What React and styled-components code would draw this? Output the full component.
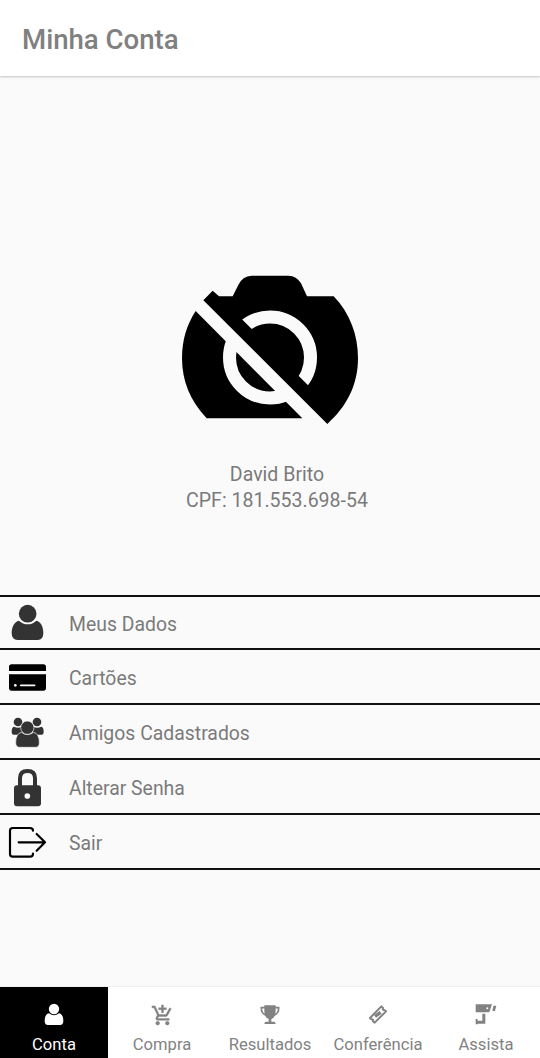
import React from "react";
import styled, { createGlobalStyle } from "styled-components";
import { MdAddShoppingCart } from "react-icons/md";

const GlobalStyle = createGlobalStyle`
  * { box-sizing: border-box; }
  body { margin: 0; background: #fafafa; font-family: Roboto, "Noto Sans", sans-serif; }
`;

const Screen = styled.div`
  display: flex;
  flex-direction: column;
  height: 1058px;
  background: #fafafa;
  color: #7a7a7a;
`;

const Header = styled.header`
  display: flex;
  align-items: center;
  flex: none;
  height: 76px;
  padding: 3px 22px 0;
  background: #fff;
  box-shadow: 0 1px 2px rgba(0, 0, 0, 0.22);
`;

const Title = styled.h1`
  margin: 0;
  font-size: 27.6px;
  font-weight: 500;
  color: #808080;
`;

const Profile = styled.section`
  display: flex;
  flex-direction: column;
  align-items: center;
  flex: none;
  height: 519px;
  padding-top: 184px;
`;

const Photo = styled.svg`
  width: 200px;
  height: 180px;
`;

const Info = styled.div`
  margin: 22px 0 0 14px;
  text-align: center;
  font-size: 19.55px;
  line-height: 26px;
`;

const Menu = styled.nav`
  border-top: 2px solid #111;
`;

const MenuItem = styled.a`
  display: flex;
  align-items: center;
  height: ${(p) => (p.$first ? 53 : 55)}px;
  border-bottom: 2px solid #111;
  font-size: 19.4px;
`;

const MenuLabel = styled.span`
  padding-top: 3px;
`;

const MenuIcon = styled.svg`
  flex: none;
  width: 54px;
  height: 53px;
  margin-right: 15px;
`;

const Tabs = styled.nav`
  display: grid;
  grid-template-columns: repeat(5, 1fr);
  height: 72px;
  margin-top: auto;
  background: #fff;
  border-top: 1px solid #efefef;
`;

const Tab = styled.a`
  display: flex;
  flex-direction: column;
  align-items: center;
  padding-top: 16px;
  background: ${(p) => (p.$active ? "#000" : "#fff")};
  color: ${(p) => (p.$active ? "#fff" : "#828282")};
  font-size: 16.6px;
  line-height: 20px;
  white-space: nowrap;
`;

const TabIcon = styled.span`
  display: flex;
  align-items: center;
  justify-content: center;
  height: 24px;
  margin-bottom: 8px;
`;

const CartIcon = styled(MdAddShoppingCart)`
  width: 23px;
  height: 23px;

  path:last-child {
    stroke: currentColor;
    stroke-width: 0.4px;
  }
`;

const NoPhoto = () => (
  <Photo viewBox="0 0 600 540">
    <clipPath id="ring-upper">
      <path d="M197 159L435 397H520V100H197Z" />
    </clipPath>
    <clipPath id="ring-lower">
      <path d="M81 149L403 471V520H75Z" />
    </clipPath>
    <path d="M128 92L147 109H188L205 75Q217 48 245 47H355Q380 48 393 70L411 109H491C540 160 564 225 564 295C564 375 530 440 472 492L100 121Z" />
    <path d="M77 153C50 195 36 240 36 295C36 365 62 425 110 475H397Z" />
    <g fill="none" stroke="#fafafa" strokeWidth="39">
      <circle cx="300" cy="292.500" r="121.500" clipPath="url(#ring-upper)" />
      <circle cx="300" cy="292.500" r="121.500" clipPath="url(#ring-lower)" />
    </g>
  </Photo>
);

const UserIcon = () => (
  <MenuIcon viewBox="0 18 162 159" fill="#333">
    <circle cx="83" cy="71" r="26.5" />
    <path d="M57 92Q68 103 83 103Q98 103 109 92C123 95 130 110 130 129Q130 150 113 150H53Q35 150 35 129C35 110 43 95 57 92Z" />
  </MenuIcon>
);

const CardIcon = () => (
  <MenuIcon viewBox="0 180 162 159">
    <path d="M27 243V231Q27 223 35 223H130Q138 223 138 231V243ZM27 253H138V294Q138 302 130 302H35Q27 302 27 294Z" />
    <circle cx="46" cy="286" r="4" fill="#fafafa" />
    <path d="M62 286H104" stroke="#fafafa" strokeWidth="5" strokeLinecap="round" />
  </MenuIcon>
);

const FriendsIcon = () => (
  <MenuIcon viewBox="0 15 162 159" fill="#333">
    <circle cx="54" cy="66" r="13" />
    <circle cx="111" cy="66" r="13" />
    <path d="M42 80Q54 86 66 80V104H41Q35 104 35 95Q35 82 42 80ZM124 80Q112 86 99 80V104H125Q131 104 131 95Q131 82 124 80Z" />
    <g stroke="#fafafa" strokeWidth="2">
      <path d="M64 97Q82 110 101 97Q118 101 118 128Q118 142 106 142H60Q47 142 47 128Q47 101 64 97Z" />
      <circle cx="82" cy="83" r="20" />
    </g>
  </MenuIcon>
);

const LockIcon = () => (
  <MenuIcon viewBox="0 180 162 159" fill="#333">
    <rect x="42" y="256" width="81" height="63" rx="9" />
    <path d="M60 260V235Q60 213 82.500 213Q105 213 105 235V260" fill="none" stroke="#333" strokeWidth="12" />
    <circle cx="82" cy="288" r="8.500" fill="#fafafa" />
  </MenuIcon>
);

const ExitIcon = () => (
  <MenuIcon viewBox="0 345 162 159" fill="none" stroke="#000" strokeWidth="6.5" strokeLinecap="round" strokeLinejoin="round">
    <path d="M99 392Q99 384 90 384H38Q30 384 30 392V462Q30 470 38 470H90Q99 470 99 461M56 427H135M110 402L135 427L110 452" />
  </MenuIcon>
);

const AccountTabIcon = () => (
  <svg width="36" height="24" viewBox="108 69 108 72" fill="currentColor">
    <circle cx="162" cy="87" r="15.500" />
    <path d="M147 100Q162 112 177 100C187 102 190 112 190 122Q190 135 180 135H144Q134 135 134 122C134 112 137 102 147 100Z" />
  </svg>
);

const TrophyIcon = () => (
  <svg width="36" height="24" viewBox="6 15 108 72" fill="currentColor">
    <path d="M43 22H77V40Q76 59 64 63V71H72Q76 71 77 78H43Q44 71 48 71H56V63Q44 59 43 40Z" />
    <path d="M45 29H34Q33 47 49 52M75 29H86Q87 47 71 52" fill="none" stroke="currentColor" strokeWidth="5" />
  </svg>
);

const TicketIcon = () => (
  <svg width="36" height="24" viewBox="270 69 108 72" fill="none" stroke="currentColor" strokeWidth="6" strokeLinejoin="round">
    <path d="M334 79L339 84Q337 91 344 91L348 94L314 128L309 124Q311 117 304 118L300 114Z" />
    <path d="M315 109L332 97" strokeWidth="10" />
  </svg>
);

const CctvIcon = () => (
  <svg width="36" height="24" viewBox="594 69 108 72" fill="currentColor">
    <path d="M617 73H666L658 97H617ZM670 77H679L675 93H667Z" />
    <path d="M637 101H646V131H623V133H617V117H623V122H637Z" />
    <circle cx="652" cy="85" r="3" fill="#fff" />
  </svg>
);

const menu = [
  ["Meus Dados", UserIcon],
  ["Cartões", CardIcon],
  ["Amigos Cadastrados", FriendsIcon],
  ["Alterar Senha", LockIcon],
  ["Sair", ExitIcon],
];

const tabs = [
  ["Conta", AccountTabIcon],
  ["Compra", CartIcon],
  ["Resultados", TrophyIcon],
  ["Conferência", TicketIcon],
  ["Assista", CctvIcon],
];

export default function App() {
  return (
    <Screen>
      <GlobalStyle />
      <Header>
        <Title>Minha Conta</Title>
      </Header>
      <Profile>
        <NoPhoto />
        <Info>
          <div>David Brito</div>
          <div>CPF: 181.553.698-54</div>
        </Info>
      </Profile>
      <Menu>
        {menu.map(([label, Icon], i) => (
          <MenuItem key={label} $first={i === 0}>
            <Icon />
            <MenuLabel>{label}</MenuLabel>
          </MenuItem>
        ))}
      </Menu>
      <Tabs>
        {tabs.map(([label, Icon], i) => (
          <Tab key={label} $active={i === 0}>
            <TabIcon>
              <Icon />
            </TabIcon>
            {label}
          </Tab>
        ))}
      </Tabs>
    </Screen>
  );
}
